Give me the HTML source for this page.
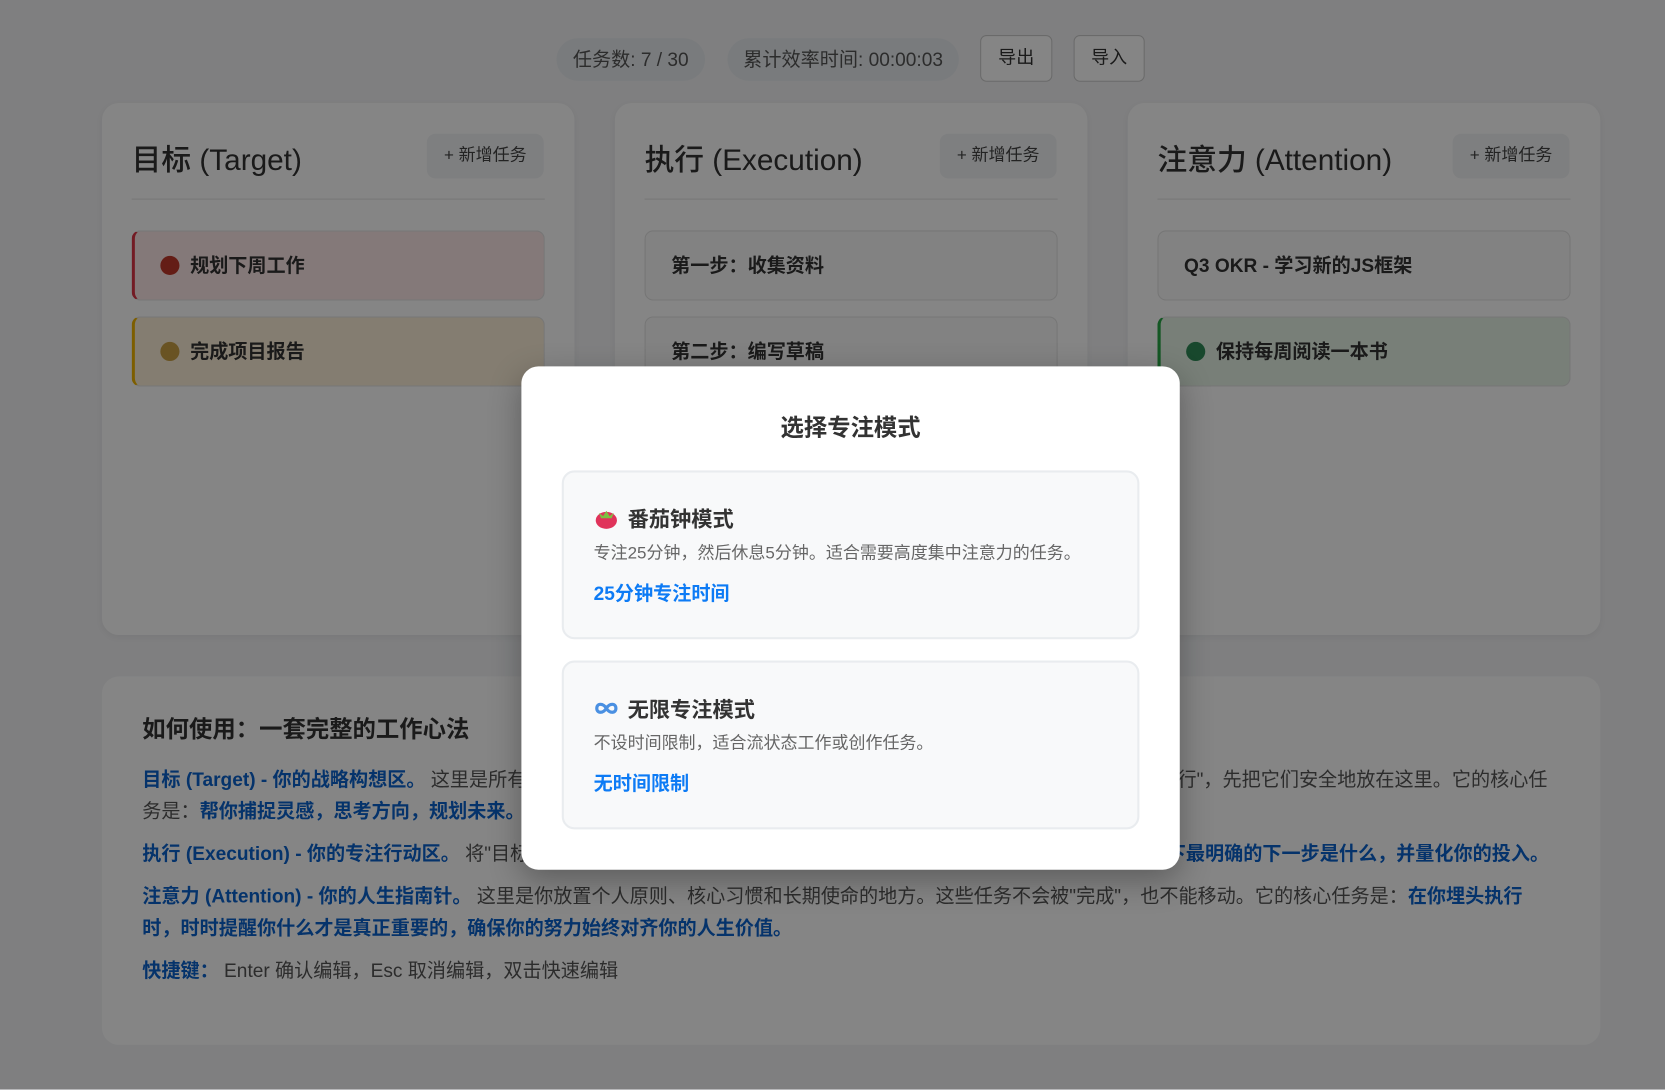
<!DOCTYPE html>
<html><head><meta charset="utf-8"><style>
*{box-sizing:border-box;margin:0;padding:0}
html,body{width:1665px;height:1089px;overflow:hidden;background:#f3f4f6}
body{font-family:"Liberation Sans","Noto Sans CJK SC",sans-serif;color:#333}
#w{position:absolute;left:0;top:0;width:1568px;height:1026px;transform:scale(1.0619);transform-origin:0 0}
.pill{position:absolute;top:36px;height:40px;border-radius:20px;background:#e9ecef;color:#555;font-size:18px;line-height:40px;text-align:center}
.btn{position:absolute;top:33px;height:44px;border:1px solid #ccc;border-radius:6px;background:#fff;font-size:17px;line-height:42px;text-align:center;color:#333}
.col{position:absolute;top:97px;width:445px;height:501px;background:#fff;border-radius:16px;box-shadow:0 2px 8px rgba(0,0,0,.06)}
.col h2{position:absolute;left:28px;top:32px;font-size:28px;font-weight:500;color:#333}
.add{position:absolute;left:306px;top:29px;width:110px;height:42px;background:#f1f3f5;border-radius:8px;font-size:16px;line-height:42px;text-align:center;color:#444}
.hr{position:absolute;left:28px;right:28px;top:90px;height:1px;background:#e5e5e5}
.task{position:absolute;left:28px;width:389px;height:66px;border:1px solid #e3e3e3;border-radius:8px;font-size:18px;font-weight:700;line-height:64px;padding-left:24px;color:#333;background:#fafafa}
.dot{display:inline-block;width:18px;height:18px;border-radius:50%;vertical-align:-3px;margin-right:10px}
.help{position:absolute;left:96px;top:637px;width:1411px;height:347px;background:#fff;border-radius:16px;padding:30px 38px}
.help h3{font-size:22px;font-weight:700;margin-top:2px;margin-bottom:18px;color:#333}
.help p{font-size:18px;line-height:30px;color:#555;margin-bottom:10px}
.help b{color:#0b63ce}
#ov{position:absolute;left:0;top:0;width:1568px;height:1026px;background:rgba(0,0,0,.48)}
.modal{position:absolute;left:491px;top:345px;width:620px;height:474px;background:#fff;border-radius:16px;box-shadow:0 10px 30px rgba(0,0,0,.3)}
.modal h4{position:absolute;top:40px;width:100%;text-align:center;font-size:22px;font-weight:700;color:#333}
.opt{position:absolute;left:38px;width:544px;height:159px;background:#f8f9fa;border:2px solid #e9ecef;border-radius:12px;padding:30px 28px}
.opt .t{font-size:20px;font-weight:700;color:#333;height:30px;line-height:30px}
.opt .d{font-size:16px;color:#666;margin-top:6px;line-height:22px}
.opt .l{font-size:18px;font-weight:700;color:#0d7bf5;margin-top:12px}
</style></head><body><div id="w">
<div class="pill" style="left:524px;width:140px">任务数: 7 / 30</div>
<div class="pill" style="left:685px;width:218px">累计效率时间: 00:00:03</div>
<div class="btn" style="left:923px;width:68px">导出</div>
<div class="btn" style="left:1011px;width:67px">导入</div>

<div class="col" style="left:96px"><h2>目标 (Target)</h2><div class="add">+ 新增任务</div><div class="hr"></div>
<div class="task" style="top:120px;border-left:3px solid #dc3545;background:#fde8e8"><span class="dot" style="background:#c0392b"></span>规划下周工作</div>
<div class="task" style="top:201px;border-left:3px solid #f0b400;background:#fdf0d8"><span class="dot" style="background:#c9a043"></span>完成项目报告</div></div>

<div class="col" style="left:579px"><h2>执行 (Execution)</h2><div class="add">+ 新增任务</div><div class="hr"></div>
<div class="task" style="top:120px">第一步：收集资料</div>
<div class="task" style="top:201px">第二步：编写草稿</div></div>

<div class="col" style="left:1062px"><h2>注意力 (Attention)</h2><div class="add">+ 新增任务</div><div class="hr"></div>
<div class="task" style="top:120px">Q3 OKR - 学习新的JS框架</div>
<div class="task" style="top:201px;border-left:3px solid #28a745;background:#e6f3e6"><span class="dot" style="background:#2e8b57"></span>保持每周阅读一本书</div></div>

<div class="help"><h3>如何使用：一套完整的工作心法</h3>
<p><b>目标 (Target) - 你的战略构想区。</b> 这里是所有想法、计划和长期目标的起点。无论是"学习一门新技能"还是"策划一次长途旅行"，先把它们安全地放在这里。它的核心任务是：<b>帮你捕捉灵感，思考方向，规划未来。</b></p>
<p><b>执行 (Execution) - 你的专注行动区。</b> 将"目标"拆解成具体可执行的步骤，放在这里逐个完成。它的核心任务是：<b>告诉你当下最明确的下一步是什么，并量化你的投入。</b></p>
<p><b>注意力 (Attention) - 你的人生指南针。</b> 这里是你放置个人原则、核心习惯和长期使命的地方。这些任务不会被"完成"，也不能移动。它的核心任务是：<b>在你埋头执行时，时时提醒你什么才是真正重要的，确保你的努力始终对齐你的人生价值。</b></p>
<p><b>快捷键：</b> Enter 确认编辑，Esc 取消编辑，双击快速编辑</p></div>

<div id="ov"></div>
<div class="modal"><h4>选择专注模式</h4>
<div class="opt" style="top:98px"><div class="t"><svg width="24" height="22" viewBox="0 0 24 22" style="vertical-align:-3px;margin-right:8px"><ellipse cx="12" cy="13" rx="10" ry="8" fill="#e0335a"/><path d="M5 6 L9 9 L12 4 L15 9 L19 6 L17 11 H7Z" fill="#7cc142"/></svg>番茄钟模式</div><div class="d">专注25分钟，然后休息5分钟。适合需要高度集中注意力的任务。</div><div class="l">25分钟专注时间</div></div>
<div class="opt" style="top:277px"><div class="t"><svg width="24" height="22" viewBox="0 0 24 22" style="vertical-align:-3px;margin-right:8px"><path d="M12 11 C9 6 3 6 3 11 C3 16 9 16 12 11 C15 6 21 6 21 11 C21 16 15 16 12 11Z" fill="none" stroke="#4a90e2" stroke-width="3"/></svg>无限专注模式</div><div class="d">不设时间限制，适合流状态工作或创作任务。</div><div class="l">无时间限制</div></div>
</div>
</div></body></html>
